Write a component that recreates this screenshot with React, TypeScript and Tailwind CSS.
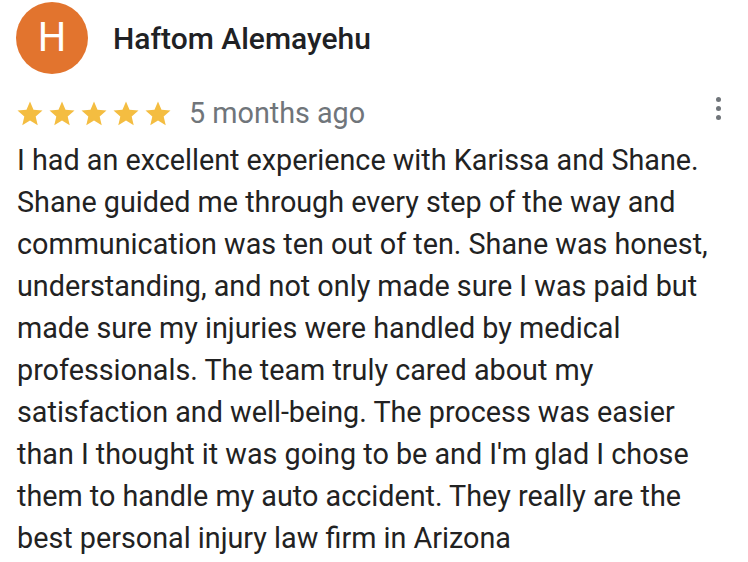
import React from "react";

const lines = [
  "I had an excellent experience with Karissa and Shane.",
  "Shane guided me through every step of the way and",
  "communication was ten out of ten. Shane was honest,",
  "understanding, and not only made sure I was paid but",
  "made sure my injuries were handled by medical",
  "professionals. The team truly cared about my",
  "satisfaction and well-being. The process was easier",
  "than I thought it was going to be and I'm glad I chose",
  "them to handle my auto accident. They really are the",
  "best personal injury law firm in Arizona",
];

function Star() {
  return (
    <svg viewBox="0 0 24 24" className="w-[30px] h-[30px]" fill="#f4bd41">
      <path d="M12 17.27L18.18 21l-1.64-7.03L22 9.24l-7.19-.61L12 2 9.19 8.63 2 9.24l5.46 4.73L5.82 21z" />
    </svg>
  );
}

export default function App() {
  return (
    <div className="w-[748px] h-[562px] bg-white overflow-hidden font-['Roboto',sans-serif]">
      <div className="flex items-center gap-[25px] pl-4 pt-[2px]">
        <div className="w-[72px] h-[72px] rounded-full bg-[#e2742e] flex items-center justify-center text-white text-[40px] leading-none">
          H
        </div>
        <div className="text-[30px] font-medium text-[#202124]">Haftom Alemayehu</div>
      </div>
      <div className="flex items-center pl-[15px] pr-[27px] mt-[20px] h-[40px]">
        <div className="flex gap-[2px]">
          <Star />
          <Star />
          <Star />
          <Star />
          <Star />
        </div>
        <div className="ml-[16px] text-[28.75px] text-[#70757a]">5 months ago</div>
        <div className="ml-auto flex flex-col gap-[4px] -mt-[12px]">
          <span className="w-[5px] h-[5px] rounded-full bg-[#70757a]" />
          <span className="w-[5px] h-[5px] rounded-full bg-[#70757a]" />
          <span className="w-[5px] h-[5px] rounded-full bg-[#70757a]" />
        </div>
      </div>
      <div className="pl-[17px] mt-[5px] text-[28.75px] leading-[42px] text-[#222222]">
        {lines.map(l => (
          <div key={l} className="whitespace-nowrap">{l}</div>
        ))}
      </div>
    </div>
  );
}
